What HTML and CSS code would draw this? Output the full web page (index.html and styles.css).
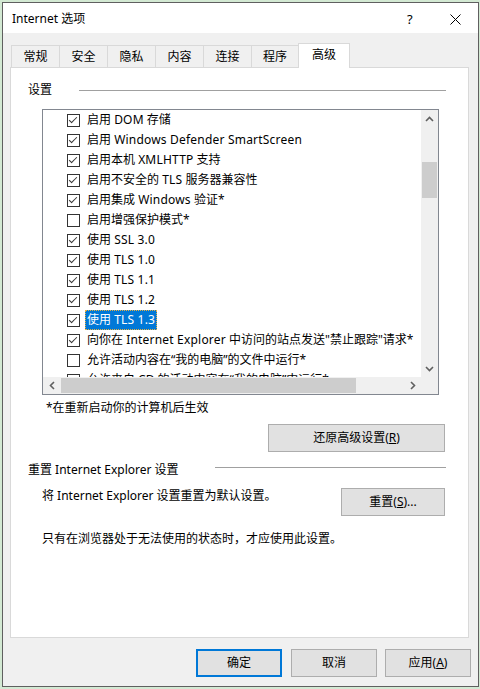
FILE: index.html
```html
<!DOCTYPE html>
<html lang="zh-CN">
<head>
<meta charset="utf-8">
<title>Internet 选项</title>
<link rel="stylesheet" href="styles.css">
</head>
<body>
<div class="window">
  <div class="titlebar">
    <span class="title">Internet 选项</span>
    <span class="help">?</span>
    <span class="close"><svg width="11" height="11" viewBox="0 0 11 11"><path d="M0.5 0.5 L10.5 10.5 M10.5 0.5 L0.5 10.5" stroke="#000" stroke-width="1" fill="none"/></svg></span>
  </div>
  <div class="client">
    <div class="tabs">
      <div class="tab">常规</div>
      <div class="tab">安全</div>
      <div class="tab">隐私</div>
      <div class="tab">内容</div>
      <div class="tab">连接</div>
      <div class="tab tab-last">程序</div>
      <div class="tab tab-active">高级</div>
    </div>
    <div class="panel">
      <div class="group-head group-settings">
        <span class="group-label">设置</span>
        <span class="rule"></span>
      </div>
      <div class="listbox">
        <div class="list-main">
          <div class="rows">
            <div class="row"><span class="cb on"></span><span class="lbl">启用 <span class="lat">DOM</span> 存储</span></div>
            <div class="row"><span class="cb on"></span><span class="lbl">启用 <span class="lat">Windows Defender SmartScreen</span></span></div>
            <div class="row"><span class="cb on"></span><span class="lbl">启用本机 <span class="lat">XMLHTTP</span> 支持</span></div>
            <div class="row"><span class="cb on"></span><span class="lbl">启用不安全的 <span class="lat">TLS</span> 服务器兼容性</span></div>
            <div class="row"><span class="cb on"></span><span class="lbl">启用集成 <span class="lat">Windows</span> 验证*</span></div>
            <div class="row"><span class="cb"></span><span class="lbl">启用增强保护模式*</span></div>
            <div class="row"><span class="cb on"></span><span class="lbl">使用 <span class="lat">SSL 3.0</span></span></div>
            <div class="row"><span class="cb on"></span><span class="lbl">使用 <span class="lat">TLS 1.0</span></span></div>
            <div class="row"><span class="cb on"></span><span class="lbl">使用 <span class="lat">TLS 1.1</span></span></div>
            <div class="row"><span class="cb on"></span><span class="lbl">使用 <span class="lat">TLS 1.2</span></span></div>
            <div class="row"><span class="cb on"></span><span class="lbl selected">使用 <span class="lat">TLS 1.3</span></span></div>
            <div class="row"><span class="cb on"></span><span class="lbl">向你在 <span class="lat">Internet Explorer</span> 中访问的站点发送"禁止跟踪"请求*</span></div>
            <div class="row"><span class="cb"></span><span class="lbl">允许活动内容在“我的电脑”的文件中运行*</span></div>
            <div class="row row-partial"><span class="cb"></span><span class="lbl">允许来自 CD 的活动内容在“我的电脑”中运行*</span></div>
          </div>
          <div class="vscroll">
            <div class="sb-btn"><svg width="9" height="6" viewBox="0 0 9 6"><path d="M1 5 L4.5 1.5 L8 5" stroke="#606060" stroke-width="1.6" fill="none"/></svg></div>
            <div class="vtrack"><div class="vthumb"></div></div>
            <div class="sb-btn"><svg width="9" height="6" viewBox="0 0 9 6"><path d="M1 1 L4.5 4.5 L8 1" stroke="#606060" stroke-width="1.6" fill="none"/></svg></div>
          </div>
        </div>
        <div class="hscroll">
          <div class="sb-btn"><svg width="6" height="9" viewBox="0 0 6 9"><path d="M5 1 L1.5 4.5 L5 8" stroke="#606060" stroke-width="1.6" fill="none"/></svg></div>
          <div class="htrack"><div class="hthumb"></div></div>
          <div class="sb-btn"><svg width="6" height="9" viewBox="0 0 6 9"><path d="M1 1 L4.5 4.5 L1 8" stroke="#606060" stroke-width="1.6" fill="none"/></svg></div>
          <div class="corner"></div>
        </div>
      </div>
      <div class="note">*在重新启动你的计算机后生效</div>
      <div class="btn-line">
        <button class="btn btn-restore">还原高级设置(<u>R</u>)</button>
      </div>
      <div class="group-head group-reset">
        <span class="group-label">重置 Internet Explorer 设置</span>
        <span class="rule"></span>
      </div>
      <div class="reset-row">
        <span class="reset-text">将 Internet Explorer 设置重置为默认设置。</span>
        <button class="btn btn-reset">重置(<u>S</u>)...</button>
      </div>
      <div class="hint">只有在浏览器处于无法使用的状态时，才应使用此设置。</div>
    </div>
    <div class="footer">
      <button class="btn btn-foot btn-default">确定</button>
      <button class="btn btn-foot btn-cancel">取消</button>
      <button class="btn btn-foot">应用(<u>A</u>)</button>
    </div>
  </div>
</div>
</body>
</html>
```

FILE: styles.css
```css
* { box-sizing: border-box; margin: 0; padding: 0; }
html, body { width: 480px; height: 689px; overflow: hidden; }
body {
  background: #d3e9d3;
  font-family: "Noto Sans", "Noto Sans CJK SC", sans-serif;
  font-size: 12px;
  color: #000;
  padding: 2px 0 0 2px;
}
.window {
  width: 477px;
  height: 685px;
  border: 1px solid #5f5f5f;
  background: #f0f0f0;
  display: flex;
  flex-direction: column;
}
.titlebar {
  height: 30px;
  background: #fff;
  display: flex;
  align-items: center;
  padding: 2px 0 0 9px;
  flex: none;
}
.title { line-height: 16px; flex: 1; }
.help { width: 14px; margin-right: 29px; font-size: 13px; line-height: 16px; }
.close { width: 11px; height: 11px; margin-right: 17px; display: flex; }
.client {
  flex: 1;
  display: flex;
  flex-direction: column;
  padding: 10px 9px 0 7px;
}
.tabs {
  display: flex;
  align-items: flex-end;
  height: 24px;
  padding-left: 1px;
  flex: none;
}
.tab {
  width: 48px;
  height: 22px;
  border: 1px solid #d9d9d9;
  border-right: none;
  border-bottom: none;
  background: #f0f0f0;
  display: flex;
  align-items: center;
  justify-content: center;
  line-height: 16px;
  padding-top: 1px;
}
.tab-last { width: 47px; }
.tab-active {
  width: 52px;
  height: 25px;
  margin-bottom: -1px;
  border-right: 1px solid #d9d9d9;
  background: #fff;
  position: relative;
  z-index: 1;
  padding-top: 0;
  padding-bottom: 2px;
}
.panel {
  height: 571px;
  border: 1px solid #d9d9d9;
  background: #fff;
  display: flex;
  flex-direction: column;
}
.group-head {
  display: flex;
  height: 16px;
  margin: 14px 22px 0 17px;
  align-items: center;
}
.group-label { line-height: 16px; white-space: nowrap; }
.group-settings .group-label { width: 51px; }
.group-reset .group-label { width: 187px; }
.rule { flex: 1; height: 1px; background: #a0a0a0; }
.group-reset { margin-top: 10px; }
.group-reset .rule { align-self: flex-start; margin-top: 5px; }
.listbox {
  margin: 11px 0 0 31px;
  width: 397px;
  height: 286px;
  border: 1px solid #828790;
  background: #fff;
  display: flex;
  flex-direction: column;
}
.list-main { display: flex; height: 267px; }
.rows { width: 378px; overflow: hidden; }
.row {
  height: 20px;
  display: flex;
  align-items: center;
  padding-left: 24px;
  white-space: nowrap;
}
.cb {
  width: 13px;
  height: 13px;
  border: 1px solid #333;
  background: #fff;
  flex: none;
  margin-top: 1px;
  margin-right: 5px;
  position: relative;
}
.cb.on::after {
  content: "";
  position: absolute;
  left: 3px;
  top: 0px;
  width: 3px;
  height: 7px;
  border-right: 1px solid #333;
  border-bottom: 1px solid #333;
  transform: rotate(45deg);
}
.lbl { line-height: 20px; padding: 0 2px; height: 20px; }
.lat { letter-spacing: 0.2px; }
.lbl.selected {
  background: #0078d7;
  color: #fff;
  outline: 1px dotted #e8b040;
  outline-offset: -1px;
}
.vscroll {
  width: 17px;
  background: #f0f0f0;
  display: flex;
  flex-direction: column;
}
.sb-btn {
  width: 17px;
  height: 17px;
  display: flex;
  align-items: center;
  justify-content: center;
  flex: none;
}
.vtrack { flex: 1; padding-top: 35px; }
.vthumb { height: 36px; margin: 0 1px; background: #cdcdcd; }
.hscroll {
  height: 17px;
  display: flex;
  background: #f0f0f0;
}
.htrack { flex: 1; display: flex; align-items: stretch; padding-left: 1px; }
.hthumb { width: 295px; margin: 1px 0; background: #cdcdcd; }
.corner { width: 17px; background: #f0f0f0; }
.note { margin: 3px 0 0 35px; line-height: 20px; }
.btn-line { display: flex; justify-content: flex-end; margin: 6px 23px 0 0; }
.btn {
  font: inherit;
  background: #e1e1e1;
  border: 1px solid #adadad;
  color: #000;
  height: 28px;
  line-height: 16px;
  display: flex;
  align-items: center;
  justify-content: center;
}
.btn u { text-decoration: underline; }
.btn-restore { width: 177px; }
.reset-row {
  display: flex;
  justify-content: space-between;
  margin: 8px 23px 0 31px;
}
.reset-text { line-height: 20px; }
.btn-reset { width: 104px; margin-top: 2px; }
.hint { margin: 13px 0 0 31px; line-height: 20px; }
.footer {
  display: flex;
  justify-content: flex-end;
  gap: 9px;
  margin: 11px -2px 0 0;
}
.btn-foot { width: 86px; }
.btn-cancel { margin-right: -1px; }
.btn-default { border: 2px solid #0078d7; }
```
